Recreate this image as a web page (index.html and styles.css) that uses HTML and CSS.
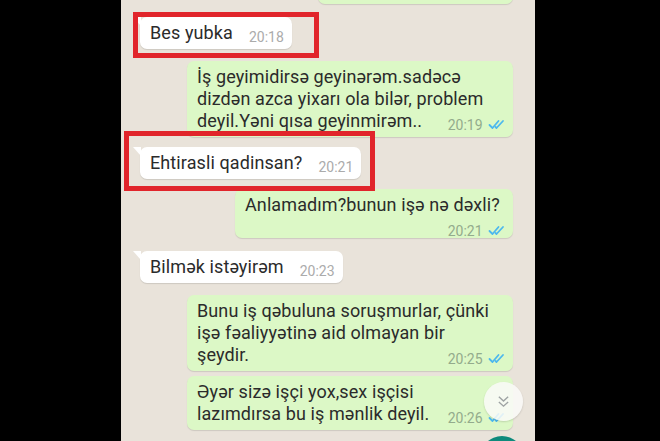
FILE: index.html
```html
<!DOCTYPE html>
<html lang="az">
<head>
  <meta charset="UTF-8" />
  <meta name="viewport" content="width=device-width, initial-scale=1.0"/>
  <title>Chat</title>
  <link rel="stylesheet" href="styles.css">
</head>
<body>

  <div class="screen">
    <div class="chat">
      <div class="msg out prev"></div>

      <div class="msg in gap-13">Bes yubka <span class="time">20:18</span></div>

      <div class="msg out wide gap-12">İş geyimidirsə geyinərəm.sadəcə<br>dizdən azca yixarı ola bilər, problem<br>deyil.Yəni qısa geyinmirəm.. <span class="time">20:19 <svg class="ticks" viewBox="0 0 16 11"><polyline points="1,6 4,9 10,2"/><polyline points="7,8 8,9 14.5,2"/></svg></span></div>

      <div class="msg in gap-10">Ehtirasli qadinsan? <span class="time">20:21</span></div>

      <div class="msg out narrow gap-10">Anlamadım?bunun işə nə dəxli? <span class="time">20:21 <svg class="ticks" viewBox="0 0 16 11"><polyline points="1,6 4,9 10,2"/><polyline points="7,8 8,9 14.5,2"/></svg></span></div>

      <div class="msg in gap-13">Bilmək istəyirəm <span class="time">20:23</span></div>

      <div class="msg out wide gap-12">Bunu iş qəbuluna soruşmurlar, çünki<br>işə fəaliyyətinə aid olmayan bir<br>şeydir. <span class="time">20:25 <svg class="ticks" viewBox="0 0 16 11"><polyline points="1,6 4,9 10,2"/><polyline points="7,8 8,9 14.5,2"/></svg></span></div>

      <div class="msg out wide gap-5">Əyər sizə işçi yox,sex işçisi<br>lazımdırsa bu iş mənlik deyil. <span class="time">20:26 <svg class="ticks" viewBox="0 0 16 11"><polyline points="1,6 4,9 10,2"/><polyline points="7,8 8,9 14.5,2"/></svg></span></div>
    </div>

    <!-- red highlight frames drawn over the screenshot -->
    <div class="mark mark-1"></div>
    <div class="mark mark-2"></div>

    <div class="scroll-down">
      <svg viewBox="0 0 14 14"><polyline points="2,2 7,6.5 12,2"/><polyline points="2,7.5 7,12 12,7.5"/></svg>
    </div>
    <div class="fab"></div>
  </div>

</body>
</html>
```

FILE: styles.css
```css
* {
  box-sizing: border-box;
}

body {
  margin: 0;
  height: 441px;
  overflow: hidden;
  background-color: #000;
  font-family: Roboto, 'Noto Sans', sans-serif;
}

.screen {
  position: relative;
  width: 414px;
  height: 441px;
  margin-left: 121px;
  background-color: #e9e3da;
  overflow: hidden;
}

.chat {
  display: flex;
  flex-direction: column;
  padding: 0 22px 0 19px;
}

.msg {
  position: relative;
  display: flow-root;
  max-width: 326px;
  padding: 5px 8px 5px 10px;
  border-radius: 7px;
  font-size: 18px;
  letter-spacing: 0.1px;
  line-height: 22px;
  color: #2b2b2b;
  box-shadow: 0 1px 1px rgba(0,0,0,0.12);
}

.in {
  align-self: flex-start;
  background-color: #fff;
}

.in::before {
  content: "";
  position: absolute;
  top: 0;
  left: -7px;
  border-top: 9px solid #fff;
  border-left: 8px solid transparent;
}

.out {
  align-self: flex-end;
  background-color: #dcf8c6;
}

.wide {
  width: 326px;
}

.narrow {
  width: 278px;
  white-space: nowrap;
}

.prev {
  width: 195px;
  height: 30px;
  margin-top: -26px;
}

.gap-5 { margin-top: 5px; }
.gap-10 { margin-top: 10px; }
.gap-12 { margin-top: 12px; }
.gap-13 { margin-top: 13px; }

.time {
  float: right;
  margin: 7px 0 -6px 16px;
  font-size: 14px;
  letter-spacing: 0;
  line-height: 16px;
  color: #ababab;
}

.out .time {
  color: #93ab8c;
}

.ticks {
  width: 17px;
  height: 11px;
  margin-left: 2px;
  fill: none;
  stroke: #4cb8ee;
  stroke-width: 1.8;
  stroke-linecap: round;
  stroke-linejoin: round;
}

.mark {
  position: absolute;
  border: 5px solid #e1252b;
}

.mark-1 {
  left: 12px;
  top: 12px;
  width: 186px;
  height: 46px;
}

.mark-2 {
  left: 3px;
  top: 131px;
  width: 251px;
  height: 60px;
}

.scroll-down {
  position: absolute;
  left: 363px;
  top: 382px;
  width: 39px;
  height: 39px;
  border-radius: 50%;
  background-color: rgba(250,250,248,0.85);
  box-shadow: 0 1px 2px rgba(0,0,0,0.15);
  display: flex;
  align-items: center;
  justify-content: center;
}

.scroll-down svg {
  width: 13px;
  height: 13px;
  fill: none;
  stroke: #9ea3a3;
  stroke-width: 1.5;
}

.fab {
  position: absolute;
  left: 359px;
  top: 436px;
  width: 44px;
  height: 44px;
  border-radius: 50%;
  background-color: #0e8a7c;
}
```
